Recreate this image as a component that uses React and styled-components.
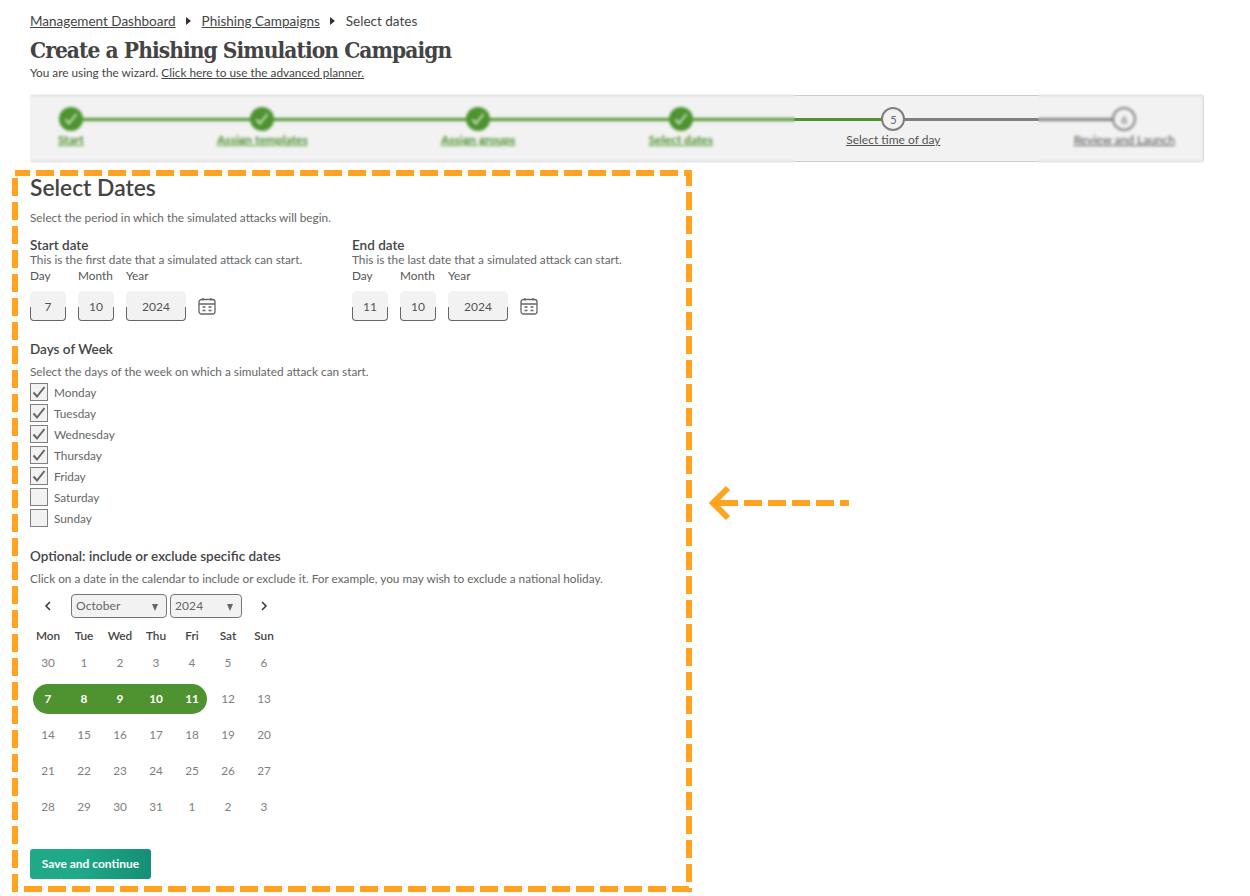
import React from "react";
import styled, { createGlobalStyle } from "styled-components";

const Global = createGlobalStyle`
  html, body { margin: 0; padding: 0; background: #fff; }
  body { font-family: Lato, "Open Sans", sans-serif; color: #444; font-size: 12px; }
`;
const Page = styled.div`
  position: relative;
  width: 1250px;
  height: 896px;
  box-sizing: border-box;
  overflow: hidden;
  padding: 12px 46px 0 30px;
`;
const Crumbs = styled.nav`
  display: flex;
  align-items: center;
  height: 17px;
  font-size: 13.5px;
  color: #444;
`;
const Crumb = styled.a`
  color: #444;
  text-decoration: underline;
`;
const CrumbArrow = styled.span`
  width: 0;
  height: 0;
  margin: 0 10.5px 0 10.5px;
  border-left: 5px solid #333;
  border-top: 4px solid transparent;
  border-bottom: 4px solid transparent;
`;
const Title = styled.h1`
  margin: 6px 0 0;
  font-family: "DejaVu Serif Condensed", "DejaVu Serif", serif;
  font-weight: 700;
  font-size: 22.5px;
  letter-spacing: -0.93px;
  line-height: 30px;
  color: #444;
`;
const Intro = styled.p`
  margin: 1px 0 0;
  font-size: 11.8px;
  line-height: 14px;
  color: #444;
  a { color: #444; text-decoration: underline; }
`;
const Stepper = styled.div`
  position: relative;
  margin-top: 15px;
  width: 1174px;
  height: 67px;
  box-sizing: border-box;
  padding: 0 28px;
  background: #f2f2f2;
  border-top: 1px solid #ccc;
  border-bottom: 1px solid #ccc;
  border-right: 1px solid #ccc;
  border-radius: 3px;
  display: flex;
  justify-content: space-between;
`;
const TrackLine = styled.div`
  position: absolute;
  top: 22px;
  height: 3px;
  left: ${(p) => p.$left}px;
  width: ${(p) => p.$width}px;
  background: ${(p) => p.$color};
`;
const Step = styled.div`
  position: relative;
  display: flex;
  flex-direction: column;
  align-items: center;
  padding-top: 11px;
`;
const Dot = styled.div`
  width: 24px;
  height: 24px;
  box-sizing: border-box;
  border-radius: 50%;
  display: flex;
  align-items: center;
  justify-content: center;
  font-size: 11px;
  color: #666;
  background: ${(p) => (p.$done ? "#4e9330" : "#f2f2f2")};
  border: ${(p) => (p.$done ? "none" : "2px solid #808080")};
`;
const StepLabel = styled.a`
  margin-top: 1px;
  font-size: 12px;
  line-height: 15px;
  font-weight: ${(p) => (p.$done ? 700 : 400)};
  white-space: nowrap;
  color: ${(p) => (p.$done ? "#4e9330" : "#555")};
  text-decoration: underline;
`;
const BlurVeil = styled.div`
  position: absolute;
  top: -2px;
  bottom: -2px;
  left: ${(p) => p.$left}px;
  width: ${(p) => p.$width}px;
  backdrop-filter: blur(1.6px);
`;
const Heading = styled.h2`
  margin: 11px 0 0;
  font-size: 22.8px;
  line-height: 28px;
  font-weight: 600;
  color: #444;
`;
const Note = styled.p`
  margin: ${(p) => p.$top || 0}px 0 0;
  font-size: 11.8px;
  line-height: 14px;
  color: #666;
`;
const DateColumns = styled.div`
  display: grid;
  grid-template-columns: 322px 322px;
  margin-top: 12px;
`;
const SubHeading = styled.h3`
  margin: ${(p) => p.$top || 0}px 0 0;
  font-size: 13.5px;
  line-height: 16px;
  font-weight: 600;
  color: #444;
`;
const FieldLabels = styled.div`
  display: flex;
  gap: 12px;
  font-size: 11.8px;
  line-height: 14px;
  margin-top: 2px;
  color: #555;
`;
const FieldLabel = styled.span`
  width: ${(p) => p.$w}px;
`;
const FieldRow = styled.div`
  display: flex;
  gap: 12px;
  align-items: center;
  margin-top: 8px;
`;
const Field = styled.div`
  position: relative;
  width: ${(p) => p.$w}px;
  height: 30px;
  border-radius: 5px;
  background: #f2f2f2;
  display: flex;
  align-items: center;
  justify-content: center;
  font-size: 12px;
  color: #555;
  &::after {
    content: "";
    position: absolute;
    left: 0;
    right: 0;
    bottom: 0;
    height: 14px;
    box-sizing: border-box;
    border: 1px solid #666;
    border-top: none;
    border-radius: 0 0 4px 4px;
  }
`;
const DayList = styled.div`
  display: flex;
  flex-direction: column;
  gap: 3px;
  margin-top: 4px;
`;
const DayRow = styled.label`
  display: flex;
  align-items: center;
  gap: 6px;
  height: 18px;
  font-size: 11.8px;
  color: #666;
`;
const Box = styled.span`
  width: 18px;
  height: 18px;
  box-sizing: border-box;
  background: #f2f2f2;
  border: 1px solid #808080;
  display: flex;
  align-items: center;
  justify-content: center;
`;
const CalHeader = styled.div`
  display: grid;
  grid-template-columns: 36px 5px 96px 3px 72px 4px 36px;
  width: 252px;
  height: 24px;
  align-items: center;
  margin-top: 8px;
`;
const Chevron = styled.div`
  grid-column: ${(p) => p.$col};
  display: flex;
  justify-content: center;
  color: #333;
`;
const Select = styled.div`
  grid-column: ${(p) => p.$col};
  height: 24px;
  box-sizing: border-box;
  padding: 0 5px 2px 4px;
  border: 1px solid #777;
  border-radius: 4px;
  background: #f2f2f2;
  display: flex;
  align-items: center;
  justify-content: space-between;
  font-size: 12px;
  letter-spacing: 0.1px;
  color: #666;
  &::after {
    content: "";
    width: 0;
    height: 0;
    margin: 4px 3px 0 0;
    border-top: 7px solid #666;
    border-left: 3.5px solid transparent;
    border-right: 3.5px solid transparent;
  }
`;
const CalGrid = styled.div`
  display: grid;
  grid-template-columns: repeat(7, 36px);
  width: 252px;
  margin-top: 8px;
`;
const WeekDay = styled.div`
  height: 18px;
  display: flex;
  align-items: center;
  justify-content: center;
  font-size: 11.8px;
  font-weight: 600;
  color: #444;
`;
const Day = styled.div`
  height: 36px;
  display: flex;
  align-items: center;
  justify-content: center;
  font-size: 11.8px;
  color: ${(p) => (p.$sel ? "#fff" : "#808080")};
  font-weight: ${(p) => (p.$sel ? 700 : 400)};
  position: relative;
  span { position: relative; }
  ${(p) =>
    p.$sel &&
    `&::before {
      content: "";
      position: absolute;
      top: 4px;
      bottom: 2px;
      left: ${p.$first ? 3 : 0}px;
      right: ${p.$last ? 3 : 0}px;
      background: #4e9330;
      border-radius: ${p.$first ? "15px 0 0 15px" : p.$last ? "0 15px 15px 0" : "0"};
    }`}
`;
const SaveButton = styled.button`
  display: block;
  margin-top: 25px;
  width: 121px;
  height: 30px;
  padding: 0 0 2px;
  border: none;
  border-radius: 3px;
  background: linear-gradient(90deg, #1fa987 0%, #1fa987 40%, #148f75 100%);
  color: #fff;
  font-family: Lato, sans-serif;
  font-size: 12px;
  font-weight: 700;
`;
const Annotation = styled.svg`
  position: absolute;
  left: 0;
  top: 0;
  pointer-events: none;
`;

const CalendarIcon = () => (
  <svg width="18" height="18" viewBox="0 0 18 18" fill="none" stroke="#666" strokeWidth="1.3">
    <rect x="1" y="2.5" width="16" height="14.5" rx="2.5" />
    <path d="M1 7h16M5 1v2.5M13 1v2.5" />
    <path d="M4.5 10h3M10.5 10h3M4.5 13.5h3M10.5 13.5h3" strokeWidth="1.6" />
  </svg>
);

const Check = ({ color = "#666", size = 14, width = 2 }) => (
  <svg width={size} height={size} viewBox="0 0 14 14" fill="none" stroke={color} strokeWidth={width}>
    <path d="M1.5 7.5 L5 11.5 L12.5 2" />
  </svg>
);

const steps = [
  ["Start", true],
  ["Assign templates", true],
  ["Assign groups", true],
  ["Select dates", true],
  ["Select time of day", false, "5"],
  ["Review and Launch", false, "6"],
];

const DateGroup = ({ title, note, day }) => (
  <div>
    <SubHeading>{title}</SubHeading>
    <Note>{note}</Note>
    <FieldLabels>
      <FieldLabel $w={36}>Day</FieldLabel>
      <FieldLabel $w={36}>Month</FieldLabel>
      <FieldLabel $w={60}>Year</FieldLabel>
    </FieldLabels>
    <FieldRow>
      <Field $w={36}>{day}</Field>
      <Field $w={36}>10</Field>
      <Field $w={60}>2024</Field>
      <CalendarIcon />
    </FieldRow>
  </div>
);

const weekdays = ["Mon", "Tue", "Wed", "Thu", "Fri", "Sat", "Sun"];
const cells = [30, 1, 2, 3, 4, 5, 6, 7, 8, 9, 10, 11, 12, 13, 14, 15, 16, 17, 18, 19, 20, 21, 22, 23, 24, 25, 26, 27, 28, 29, 30, 31, 1, 2, 3];
const days = [
  ["Monday", true],
  ["Tuesday", true],
  ["Wednesday", true],
  ["Thursday", true],
  ["Friday", true],
  ["Saturday", false],
  ["Sunday", false],
];

export default function App() {
  return (
    <Page>
      <Global />
      <Crumbs>
        <Crumb>Management Dashboard</Crumb>
        <CrumbArrow />
        <Crumb>Phishing Campaigns</Crumb>
        <CrumbArrow />
        <span>Select dates</span>
      </Crumbs>
      <Title>Create a Phishing Simulation Campaign</Title>
      <Intro>
        You are using the wizard. <a>Click here to use the advanced planner.</a>
      </Intro>
      <Stepper>
        <TrackLine $left={41} $width={822} $color="#4e9330" />
        <TrackLine $left={863} $width={231} $color="#808080" />
        {steps.map(([label, done, n]) => (
          <Step key={label}>
            <Dot $done={done}>{done ? <Check color="#cfe3c6" /> : n}</Dot>
            <StepLabel $done={done}>{label}</StepLabel>
          </Step>
        ))}
        <BlurVeil $left={0} $width={765} />
        <BlurVeil $left={1008} $width={166} />
      </Stepper>

      <Heading>Select Dates</Heading>
      <Note $top={10}>Select the period in which the simulated attacks will begin.</Note>
      <DateColumns>
        <DateGroup title="Start date" note="This is the first date that a simulated attack can start." day="7" />
        <DateGroup title="End date" note="This is the last date that a simulated attack can start." day="11" />
      </DateColumns>

      <SubHeading $top={20}>Days of Week</SubHeading>
      <Note $top={8}>Select the days of the week on which a simulated attack can start.</Note>
      <DayList>
        {days.map(([d, on]) => (
          <DayRow key={d}>
            <Box>{on && <Check />}</Box>
            {d}
          </DayRow>
        ))}
      </DayList>

      <SubHeading $top={21}>Optional: include or exclude specific dates</SubHeading>
      <Note $top={8}>Click on a date in the calendar to include or exclude it. For example, you may wish to exclude a national holiday.</Note>
      <CalHeader>
        <Chevron $col={1}>
          <svg width="8" height="10" viewBox="0 0 8 10" fill="none" stroke="#333" strokeWidth="1.5"><path d="M6 1 L2 5 L6 9" /></svg>
        </Chevron>
        <Select $col={3}>October</Select>
        <Select $col={5}>2024</Select>
        <Chevron $col={7}>
          <svg width="8" height="10" viewBox="0 0 8 10" fill="none" stroke="#333" strokeWidth="1.5"><path d="M2 1 L6 5 L2 9" /></svg>
        </Chevron>
      </CalHeader>
      <CalGrid>
        {weekdays.map((w) => (
          <WeekDay key={w}>{w}</WeekDay>
        ))}
        {cells.map((c, i) => (
          <Day key={i} $sel={i >= 7 && i <= 11} $first={i === 7} $last={i === 11}>
            <span>{c}</span>
          </Day>
        ))}
      </CalGrid>
      <SaveButton>Save and continue</SaveButton>

      <Annotation width="1250" height="896" viewBox="0 0 1250 896" fill="none" stroke="#ffa321" strokeWidth="6">
        <rect x="15" y="173" width="674" height="716" strokeDasharray="18 6" strokeDashoffset="3" />
        <path d="M849 503H720" strokeDasharray="18 6" strokeDashoffset="9" />
        <path d="M728 488 L713 503 L728 518" strokeWidth="6" />
        <path d="M716 503H738" />
      </Annotation>
    </Page>
  );
}
